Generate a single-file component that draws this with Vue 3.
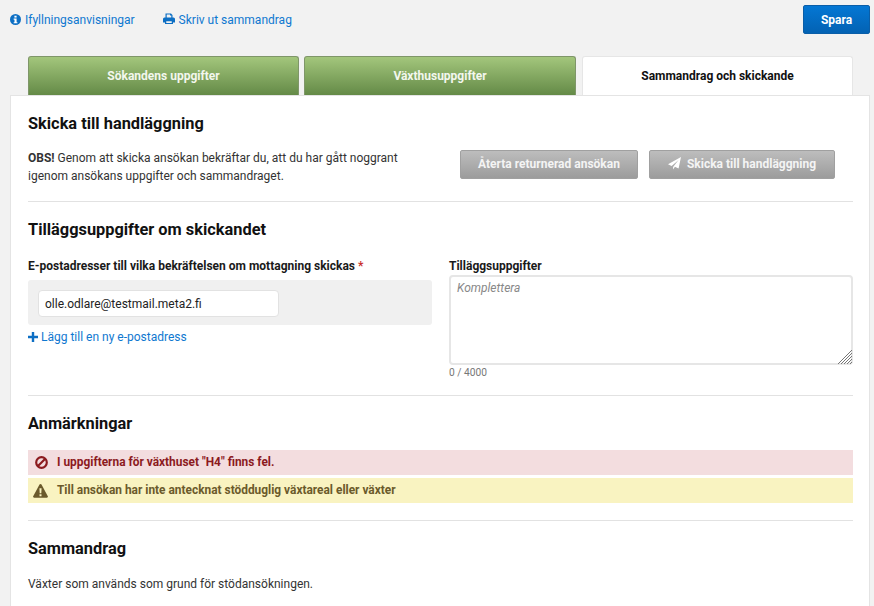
<script setup>
const tabs = [
  { label: 'Sökandens uppgifter', active: false },
  { label: 'Växthusuppgifter', active: false },
  { label: 'Sammandrag och skickande', active: true },
]
</script>

<template>
  <div class="page">
    <div class="topbar">
      <a class="link info-link">
        <svg class="ico" viewBox="0 0 24 24" width="11" height="11">
          <circle cx="12" cy="12" r="12" fill="#0d6fc4" />
          <rect x="9.600" y="3.800" width="4.800" height="4" fill="#fff" />
          <path d="M8 9.800h6.400v8h1.800v2.600H8v-2.600h1.800v-5.400H8z" fill="#fff" />
        </svg>
        Ifyllningsanvisningar
      </a>
      <a class="link print-link">
        <svg class="ico" viewBox="0 0 24 24" width="12" height="12">
          <path d="M5 1h11l3 3v6h-2.400V5h-2.600V3.200H7.400V10H5z" fill="#0d6fc4" />
          <path d="M3 9h18a3 3 0 0 1 3 3v7h-4v3H4v-3H0v-7a3 3 0 0 1 3-3zm3.500 7.500v3.300h11v-3.300z" fill="#0d6fc4" fill-rule="evenodd" />
        </svg>
        Skriv ut sammandrag
      </a>
      <button class="save">Spara</button>
    </div>

    <div class="tabs">
      <div v-for="t in tabs" :key="t.label" class="tab" :class="{ active: t.active }">{{ t.label }}</div>
    </div>

    <div class="panel">
      <section class="send">
        <h2>Skicka till handläggning</h2>
        <div class="send-row">
          <p class="obs"><b>OBS!</b> Genom att skicka ansökan bekräftar du, att du har gått noggrant igenom ansökans uppgifter och sammandraget.</p>
          <div class="send-btns">
            <button class="gray b1">Återta returnerad ansökan</button>
            <button class="gray b2">
              <svg viewBox="0 0 24 24" width="13" height="13"><path d="M24 0 19.500 21 12.800 18.200 9.400 23V18.400L19.500 5.500 6.700 16.400 0 13.600z" fill="#fff" /></svg>
              Skicka till handläggning
            </button>
          </div>
        </div>
      </section>

      <section class="extra">
        <h2>Tilläggsuppgifter om skickandet</h2>
        <div class="cols">
          <div class="col-left">
            <label>E-postadresser till vilka bekräftelsen om mottagning skickas <span class="req">*</span></label>
            <div class="mail-box">
              <input class="mail" type="text" value="olle.odlare@testmail.meta2.fi" />
            </div>
            <a class="link add-link">
              <svg viewBox="0 0 10 10" width="10" height="10"><path d="M3.800 0h2.400v3.800H10v2.400H6.200V10H3.800V6.200H0V3.800h3.800z" fill="#0d6fc4" /></svg>
              Lägg till en ny e-postadress
            </a>
          </div>
          <div class="col-right">
            <label>Tilläggsuppgifter</label>
            <div class="area-wrap">
              <textarea placeholder="Komplettera"></textarea>
              <svg class="grip" viewBox="0 0 14 14" width="14" height="14">
                <path d="M14 0 0 14M14 3 3 14M14 6 6 14M14 9 9 14M14 12 12 14" stroke="#777" stroke-width="1" fill="none" />
              </svg>
            </div>
            <div class="count">0 / 4000</div>
          </div>
        </div>
      </section>

      <section class="notes">
        <h2>Anmärkningar</h2>
        <div class="alert err">
          <svg viewBox="0 0 24 24" width="13" height="13"><circle cx="12" cy="12" r="9.800" fill="none" stroke="#8c1a1e" stroke-width="4" /><path d="M5.500 18.500 18.500 5.500" stroke="#8c1a1e" stroke-width="4" /></svg>
          <span>I uppgifterna för växthuset "H4" finns fel.</span>
        </div>
        <div class="alert warn">
          <svg viewBox="0 0 24 24" width="15" height="15"><path d="M12 1.500a1.800 1.800 0 0 1 1.600 1L23.700 21a1.800 1.800 0 0 1-1.600 2.500H1.900A1.800 1.800 0 0 1 .3 21L10.400 2.500a1.800 1.800 0 0 1 1.600-1zM10.300 8.500l.4 8h2.600l.4-8zm.1 9.500v3h3.200v-3z" fill="#6b5a2b" fill-rule="evenodd" /></svg>
          <span>Till ansökan har inte antecknat stödduglig växtareal eller växter</span>
        </div>
      </section>

      <section class="summary">
        <h2>Sammandrag</h2>
        <p>Växter som används som grund för stödansökningen.</p>
      </section>
    </div>
  </div>
</template>

<style>
html, body {
  margin: 0;
  background: #f2f2f2;
  overflow: hidden;
}
</style>

<style scoped>
.page {
  width: 874px;
  height: 606px;
  overflow: hidden;
  font-family: Roboto, "Liberation Sans", sans-serif;
  font-size: 12px;
  color: #333;
  box-sizing: border-box;
  text-rendering: optimizeLegibility;
}
.topbar {
  display: flex;
  align-items: center;
  height: 38px;
  padding: 0 4px 0 10px;
  box-sizing: border-box;
}
.link {
  color: #0f78d0;
  font-size: 12px;
}
.info-link,
.print-link {
  padding-top: 1px;
}
.ico {
  vertical-align: -1px;
  margin-right: 1px;
}
.print-link {
  margin-left: 28px;
}
.save {
  margin-left: auto;
  width: 67px;
  height: 29px;
  padding: 2px 0 0;
  border: 1px solid #0a5ea8;
  border-radius: 2px;
  background: linear-gradient(#0477d4, #0362b3);
  color: #fff;
  font: 700 12px Roboto, sans-serif;
}
.tabs {
  display: flex;
  gap: 5px;
  margin-top: 18px;
  padding-left: 28px;
}
.tab {
  width: 271px;
  height: 39px;
  box-sizing: border-box;
  display: flex;
  align-items: center;
  justify-content: center;
  border: 1px solid #7f9669;
  border-bottom: 0;
  border-radius: 3px 3px 0 0;
  background: linear-gradient(#a3c67c, #648a47);
  color: #f3f7ee;
  font-weight: 700;
  font-size: 12px;
}
.tab:nth-child(2) {
  width: 272px;
  margin-right: 1px;
}
.tab.active {
  background: #fff;
  border-color: #e6e6e6;
  color: #111;
}
.panel {
  margin-left: 10px;
  width: 860px;
  height: 520px;
  box-sizing: border-box;
  background: #fff;
  border: 1px solid #e4e4e4;
  border-bottom: 0;
  padding: 0 16px 0 17px;
}
h2 {
  margin: 0;
  font-size: 16.35px;
  font-weight: 700;
  line-height: 20px;
  color: #111;
}
section {
  border-bottom: 1px solid #e2e2e2;
}
.send {
  padding-top: 18px;
  height: 106px;
  box-sizing: border-box;
}
.send-row {
  display: flex;
  margin-top: 14px;
}
.obs {
  margin: 0;
  width: 380px;
  line-height: 18px;
  padding-top: 1px;
}
.send-btns {
  display: flex;
  gap: 11px;
  margin-left: 52px;
  margin-top: 2px;
}
.gray {
  height: 29px;
  border: 1px solid #a0a0a0;
  border-radius: 2px;
  background: linear-gradient(#bdbdbd, #9c9c9c);
  color: #f4f4f4;
  font: 700 12px Roboto, sans-serif;
  padding: 0 0 1px;
}
.b1 {
  width: 178px;
}
.b2 {
  width: 186px;
}
.b2 svg {
  vertical-align: -2px;
  margin-right: 3px;
}
.extra {
  height: 194px;
  box-sizing: border-box;
  padding-top: 18px;
}
.cols {
  display: flex;
  margin-top: 17px;
  gap: 17px;
}
.col-left {
  width: 404px;
}
.col-right {
  width: 404px;
}
label {
  display: block;
  font-weight: 700;
  font-size: 12px;
  line-height: 18px;
  color: #1a1a1a;
}
.req {
  color: #c9302c;
}
.mail-box {
  margin-top: 5px;
  height: 45px;
  box-sizing: border-box;
  padding: 10px;
  background: #f0f0f0;
  border-radius: 3px;
}
.mail {
  display: block;
  width: 241px;
  height: 27px;
  box-sizing: border-box;
  border: 1px solid #e2e2e2;
  border-radius: 4px;
  background: #fff;
  padding: 0 6px;
  font: 12px Roboto, sans-serif;
  color: #222;
}
.add-link {
  display: block;
  margin-top: 4px;
  line-height: 16px;
}
.add-link svg {
  vertical-align: -1px;
}
.area-wrap {
  position: relative;
  height: 90px;
}
textarea {
  display: block;
  width: 404px;
  height: 90px;
  box-sizing: border-box;
  border: 2px solid #e6e6e6;
  border-radius: 4px;
  padding: 4px 6px;
  font: 12px Roboto, sans-serif;
  resize: none;
  outline: none;
}
textarea::placeholder {
  font-style: italic;
  color: #888;
}
.grip {
  position: absolute;
  right: 1px;
  bottom: 1px;
}
.count {
  font-size: 10.2px;
  color: #777;
  line-height: 14px;
  margin-top: 1px;
}
.notes {
  height: 125px;
  box-sizing: border-box;
  padding-top: 18px;
}
.alert {
  display: flex;
  align-items: center;
  height: 25px;
  box-sizing: border-box;
  padding-left: 7px;
  gap: 9px;
  font-weight: 700;
  font-size: 11.9px;
}
.alert span {
  padding-bottom: 2px;
}
.err {
  margin-top: 16px;
  background: #f3dddf;
  color: #8c1a1e;
}
.warn {
  margin-top: 3px;
  background: #f9f3c1;
  color: #6b5a2b;
  padding-left: 5px;
}
.summary {
  border-bottom: 0;
  padding-top: 18px;
}
.summary p {
  margin: 16px 0 0;
  line-height: 18px;
}
</style>
